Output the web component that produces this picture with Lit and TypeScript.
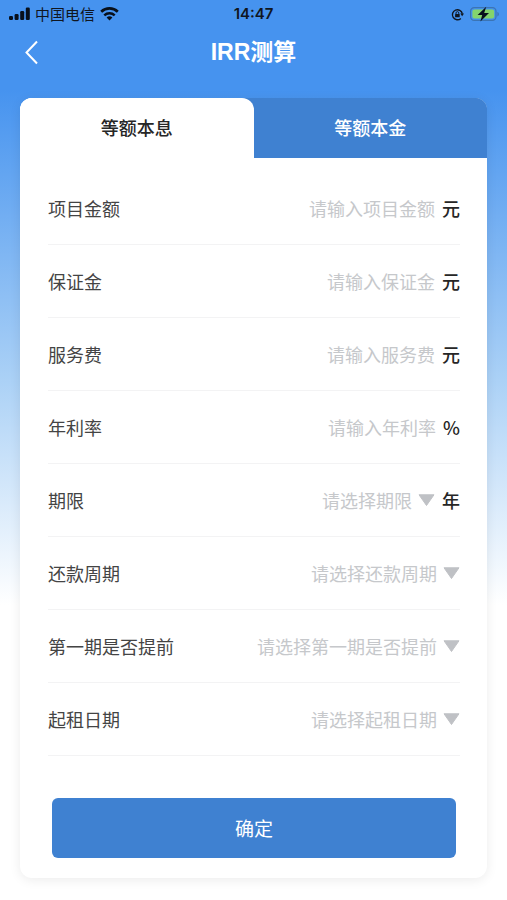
import { LitElement, html, css, nothing } from "lit";
import { customElement, property, state } from "lit/decorators.js";
import { classMap } from "lit/directives/class-map.js";

interface Field {
  id: string;
  label: string;
  hint: string;
  unit?: string;
  options?: string[];
}

const FIELDS: Field[] = [
  { id: "amount", label: "项目金额", hint: "请输入项目金额", unit: "元" },
  { id: "deposit", label: "保证金", hint: "请输入保证金", unit: "元" },
  { id: "fee", label: "服务费", hint: "请输入服务费", unit: "元" },
  { id: "rate", label: "年利率", hint: "请输入年利率", unit: "%" },
  { id: "term", label: "期限", hint: "请选择期限", unit: "年", options: ["1", "2", "3"] },
  { id: "cycle", label: "还款周期", hint: "请选择还款周期", options: ["月", "季", "年"] },
  { id: "advance", label: "第一期是否提前", hint: "请选择第一期是否提前", options: ["是", "否"] },
  { id: "start", label: "起租日期", hint: "请选择起租日期", options: ["今日", "次日"] },
];

@customElement("status-bar")
class StatusBar extends LitElement {
  static styles = css`
    :host {
      display: grid;
      grid-template-columns: 1fr auto 1fr;
      align-items: center;
      height: 28px;
      padding: 0 8px;
      color: #10161f;
      font-size: 15px;
      line-height: 20px;
    }
    .side {
      display: flex;
      align-items: center;
      gap: 5px;
    }
    .end {
      justify-content: flex-end;
      gap: 6px;
    }
    .clock {
      font-family: Inter, "Liberation Sans", sans-serif;
      font-size: 15px;
      font-weight: 600;
    }
    svg {
      display: block;
      flex: none;
    }
  `;

  render() {
    return html`
      <div class="side">
        <svg width="22" height="14" viewBox="0 0 22 14" fill="#08101b" aria-hidden="true">
          <rect x="1" y="9" width="4" height="4" rx="1.2" />
          <rect x="6.6" y="7" width="4" height="6" rx="1.2" />
          <rect x="12.2" y="4" width="4" height="9" rx="1.2" />
          <rect x="17.8" y="0.5" width="4" height="12.5" rx="1.2" />
        </svg>
        <span>中国电信</span>
        <svg width="19" height="14" viewBox="0 0 19 14" fill="none" stroke="#08101b" aria-hidden="true">
          <path d="M1.2 4.800a12 12 0 0 1 16.600 0" stroke-width="2.700" />
          <path d="M4.300 8.400a7.600 7.600 0 0 1 10.400 0" stroke-width="2.500" />
          <path d="M9.500 13.400 6.600 10.500a4.300 4.300 0 0 1 5.800 0z" fill="#08101b" stroke="none" />
        </svg>
      </div>
      <span class="clock">14:47</span>
      <div class="side end">
        <svg width="13" height="13" viewBox="0 0 14 14" fill="none" stroke="#10161f" aria-hidden="true">
          <path d="M10.600 11.200A5.400 5.400 0 1 1 12.200 6.200" stroke-width="1.500" />
          <path d="M10 6h4l-2 3z" fill="#10161f" stroke="none" />
          <rect x="4.400" y="6.400" width="5" height="3.600" rx="0.600" fill="#10161f" stroke="none" />
          <path d="M5.400 6.600V5.400a1.500 1.500 0 0 1 3 0v1.200" stroke-width="1" />
        </svg>
        <svg width="29" height="16" viewBox="0 0 29 16" aria-hidden="true">
          <rect x="0.600" y="1.600" width="25.400" height="12.800" rx="3.600" fill="none" stroke="#3b74b4" stroke-width="1.200" />
          <rect x="2.400" y="3.400" width="21.800" height="9.200" rx="2" fill="#84d46c" />
          <path d="M27.400 6v4.400c1-.4 1.500-1.200 1.500-2.200S28.400 6.400 27.400 6z" fill="#3b74b4" />
          <path d="M16.200.8 7.600 9h4.600L10.400 15.400 19 7h-4.800z" fill="#08101b" />
        </svg>
      </div>
    `;
  }
}

@customElement("form-row")
class FormRow extends LitElement {
  @property({ attribute: false }) field!: Field;

  static styles = css`
    :host {
      display: flex;
      align-items: center;
      box-sizing: border-box;
      height: 73px;
      border-bottom: 1px solid #f3f3f4;
      font-size: 18px;
      line-height: 26px;
    }
    label {
      flex: none;
      color: #444;
    }
    .control {
      flex: 1;
      min-width: 0;
      height: 48px;
      box-sizing: border-box;
      margin: 0;
      padding: 0;
      border: 0;
      outline: 0;
      background: none;
      font: inherit;
      color: #444;
      text-align: right;
    }
    .control::placeholder {
      color: #c6c8cb;
      opacity: 1;
    }
    select.control {
      appearance: none;
      text-align-last: right;
    }
    select.control:invalid {
      color: #c6c8cb;
    }
    option {
      color: #444;
    }
    .arrow {
      flex: none;
      margin-left: 6px;
    }
    .unit {
      flex: none;
      margin-left: 7px;
      color: #262626;
      font-weight: 500;
    }
  `;

  render() {
    const f = this.field;
    return html`
      <label for=${f.id}>${f.label}</label>
      ${f.options
        ? html`<select class="control" id=${f.id} required>
              <option value="" selected disabled hidden>${f.hint}</option>
              ${f.options.map((o) => html`<option value=${o}>${o}</option>`)}
            </select>
            <svg class="arrow" width="17" height="12" viewBox="0 0 17 12" aria-hidden="true">
              <path d="M1 .8h15L8.500 11.500z" fill="#bfc1c5" stroke="#bfc1c5" stroke-linejoin="round" />
            </svg>`
        : html`<input class="control" id=${f.id} inputmode="decimal" placeholder=${f.hint} />`}
      ${f.unit ? html`<span class="unit">${f.unit}</span>` : nothing}
    `;
  }
}

@customElement("app-root")
class AppRoot extends LitElement {
  @state() private tab = 0;

  static styles = css`
    :host {
      display: block;
      box-sizing: border-box;
      min-height: 100vh;
      padding-bottom: 22px;
      background: linear-gradient(#4693ef 90px, #abd1f6 380px, #fff 605px);
      font-family: "Noto Sans CJK SC", sans-serif;
    }
    .nav {
      display: grid;
      grid-template-columns: 48px 1fr 48px;
      align-items: center;
      height: 48px;
      margin-bottom: 22px;
      padding: 0 8px;
    }
    .back {
      display: grid;
      place-items: center;
      height: 48px;
      padding: 0;
      border: 0;
      background: none;
    }
    h1 {
      margin: 0;
      color: #fff;
      font-family: "Liberation Sans", "Noto Sans CJK SC", sans-serif;
      font-size: 23px;
      line-height: 32px;
      font-weight: 700;
      text-align: center;
    }
    .card {
      margin: 0 20px;
      border-radius: 12px;
      background: #fff;
      box-shadow: 0 2px 12px rgba(0, 0, 0, 0.08);
    }
    .tabs {
      display: grid;
      grid-template-columns: 1fr 1fr;
      border-radius: 12px 12px 0 0;
      background: linear-gradient(90deg, #fff 40%, #3f81d1 40%);
    }
    .tabs.second {
      background: linear-gradient(90deg, #3f81d1 60%, #fff 60%);
    }
    .tab {
      height: 60px;
      padding: 0 0 2px;
      border: 0;
      border-radius: 12px 12px 0 0;
      background: #3f81d1;
      color: #fff;
      font: 500 18px/26px "Noto Sans CJK SC", sans-serif;
    }
    .tab.active {
      background: #fff;
      color: #262626;
    }
    form {
      padding: 14px 27px 20px 28px;
    }
    .submit {
      display: block;
      width: calc(100% - 8px);
      height: 60px;
      margin: 42px 4px 0;
      padding: 0;
      border: 0;
      border-radius: 6px;
      background: #3f81d1;
      color: #fff;
      font: 400 19px/28px "Noto Sans CJK SC", sans-serif;
    }
  `;

  render() {
    return html`
      <status-bar></status-bar>
      <header class="nav">
        <button class="back" aria-label="返回">
          <svg width="16" height="26" viewBox="0 0 16 26" fill="none" stroke="#fff" stroke-width="2" aria-hidden="true">
            <path d="M13 2.500 2.500 13.500l10.500 11" />
          </svg>
        </button>
        <h1>IRR测算</h1>
      </header>
      <main class="card">
        <div class=${classMap({ tabs: true, second: this.tab === 1 })} role="tablist">
          ${["等额本息", "等额本金"].map(
            (name, i) => html`<button
              role="tab"
              aria-selected=${this.tab === i ? "true" : "false"}
              class=${classMap({ tab: true, active: this.tab === i })}
              @click=${() => (this.tab = i)}
            >${name}</button>`
          )}
        </div>
        <form @submit=${(e: Event) => e.preventDefault()}>
          ${FIELDS.map((f) => html`<form-row .field=${f}></form-row>`)}
          <button class="submit">确定</button>
        </form>
      </main>
    `;
  }
}
